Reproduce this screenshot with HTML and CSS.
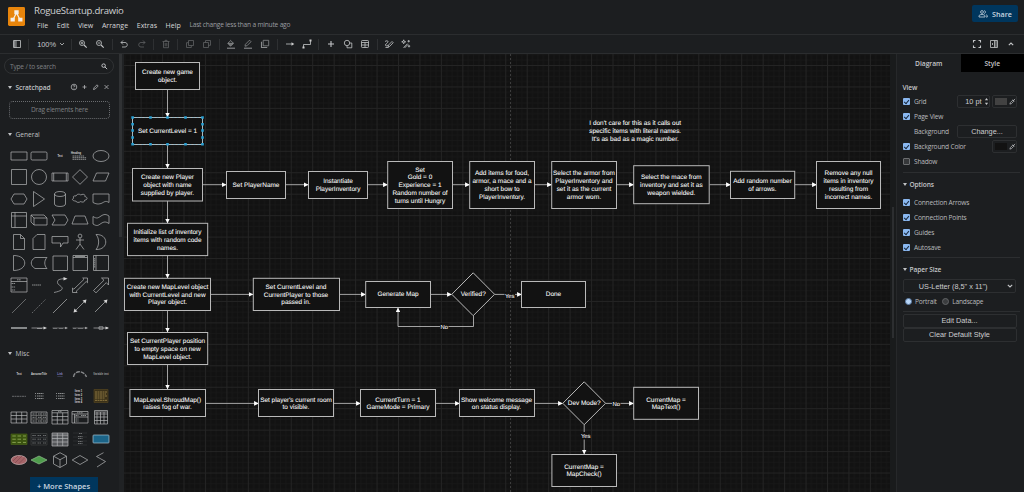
FILE: index.html
```html
<!DOCTYPE html>
<html lang="en">
<head>
  <meta charset="UTF-8">
  <meta name="viewport" content="width=device-width, initial-scale=1.0">
  <title>RogueStartup.drawio</title>
  <link rel="stylesheet" href="styles.css">
</head>
<body>

<header class="header">
  <svg class="logo" viewBox="0 0 18 20">
    <rect width="18" height="20" rx="1.5" fill="#e8850c"/>
    <path d="M9 6 5 14M9 6l4 8" stroke="#f5eee6" stroke-width="1.3"/>
    <path d="M6.7 3.5h4.6v4.2H6.7zM2.7 11.3h4.5v4H2.7zM10.8 11.3h4.5v4h-4.5z" fill="#f5eee6"/>
  </svg>
  <div class="titles">
    <div class="filename">RogueStartup.drawio</div>
    <nav class="menu">
      <span>File</span><span>Edit</span><span>View</span><span>Arrange</span><span>Extras</span><span>Help</span>
      <span class="status">Last change less than a minute ago</span>
    </nav>
  </div>
  <button class="share">
    <svg viewBox="0 0 10 8"><circle cx="4" cy="2" r="1.4"/><path d="M1 7V6c0-2 6-2 6 0v1zM6 .7c2 0 2 2.700 0 2.700M8 4.600c1 .3 1.300 1 1.300 2.400H8"/></svg>
    Share
  </button>
</header>

<div class="toolbar">
  <span class="tool"><svg viewBox="0 0 10 10"><path d="M1.500 1.500h7v7h-7zM4 1.500v7M2.700 1.500v7"/></svg></span>
  <i class="sep"></i>
  <span class="zoom">100% <svg viewBox="0 0 6 4"><path d="M1 1l2 2 2-2"/></svg></span>
  <i class="sep"></i>
  <span class="tool"><svg viewBox="0 0 10 10"><circle cx="4" cy="4" r="2.500"/><path class="thick" d="M6 6l2.700 2.700"/><path d="M2.700 4h2.600M4 2.700v2.600"/></svg></span>
  <span class="tool"><svg viewBox="0 0 10 10"><circle cx="4" cy="4" r="2.500"/><path class="thick" d="M6 6l2.700 2.700"/><path d="M2.700 4h2.600"/></svg></span>
  <i class="sep"></i>
  <span class="tool"><svg viewBox="0 0 10 10"><path d="M4 1.500 2 3.500l2 2M2 3.500h4c3 0 3 4.500 0 4.500H3"/></svg></span>
  <span class="tool off"><svg viewBox="0 0 10 10"><path d="M6 1.500l2 2-2 2M8 3.500H4c-3 0-3 4.500 0 4.500h3"/></svg></span>
  <i class="sep"></i>
  <span class="tool off"><svg viewBox="0 0 10 10"><path d="M1.500 2.500h7M4 2.300V1.300h2v1M2.500 2.500v6.200h5V2.500M4.200 4v3.300M5.800 4v3.300"/></svg></span>
  <i class="sep"></i>
  <span class="tool off"><svg viewBox="0 0 10 10"><path d="M3.500 1.500h5v5h-5zM3.500 3.700H1.500v4.800h4.800v-2"/></svg></span>
  <span class="tool off"><svg viewBox="0 0 10 10"><path d="M1.500 8.500h5v-5h-5zM3.500 3.500v-2h5v4.800h-2"/></svg></span>
  <i class="sep"></i>
  <span class="tool dim"><svg viewBox="0 0 10 10"><path d="M4.300 1.200 7.500 4.300 4.500 7 1.800 4.200 4.700 1.700"/><path d="M2 4.300h5.300L4.500 7z" fill="#999"/><path class="thick" d="M1 9.200h8"/></svg></span>
  <span class="tool dim"><svg viewBox="0 0 10 10"><path d="M2 7.200l.4-1.900L6.500 1.200 8 2.700 3.900 6.800z"/><path class="thick" d="M1 9.200h8"/></svg></span>
  <span class="tool dim"><svg viewBox="0 0 10 10"><path d="M3.200 1.300h5.500v5.500H3.200z"/><path class="thick" d="M1.500 2.800v5.700h5.700"/></svg></span>
  <i class="sep"></i>
  <span class="tool"><svg viewBox="0 0 10 10"><path d="M1 5h7"/><path d="M6.500 3.300 9.300 5 6.500 6.700z" fill="#ccc" stroke="none"/></svg></span>
  <span class="tool"><svg viewBox="0 0 10 10"><path d="M1.500 8.500V5.500h7V1.500"/><path d="M.5 7.500h2v2h-2zM7.500.5h2v2h-2z" fill="#ccc" stroke="none"/></svg></span>
  <i class="sep"></i>
  <span class="tool"><svg viewBox="0 0 10 10"><path class="thick" d="M5 2v6M2 5h6"/></svg></span>
  <span class="tool"><svg viewBox="0 0 10 10"><circle cx="4" cy="4" r="2.700"/><path d="M6.500 4h2.300v4.800H4V6.700"/></svg></span>
  <span class="tool"><svg viewBox="0 0 10 10"><rect x="1.500" y="1.500" width="7" height="7" rx=".8"/><path d="M1.500 3.500h7M1.500 6h7M5 3.500v5"/></svg></span>
  <i class="sep"></i>
  <span class="tool"><svg viewBox="0 0 10 10"><path d="M1 2.500c1.500-1 3-1 3 .2S1.500 4.500 1.500 6s1.500 1 2.500 0M4 8l.5-2L8 2.500l1.200 1.200L5.700 7.400zM1.500 8.500h3"/></svg></span>
  <span class="tool"><svg viewBox="0 0 10 10"><path d="M2.500 8.700l4-4M3.500 9l3.700-3.700M2.700.800l.5 1.500 1.500.5-1.500.5-.5 1.500-.5-1.500L.700 2.800l1.500-.5zM7.700 1v2.400M6.500 2.200h2.400M8 6v2.400M6.800 7.200h2.400"/></svg></span>
  <div class="right-tools">
    <span class="tool"><svg viewBox="0 0 10 10"><path class="thick" d="M1.500 3.500v-2h2M6.500 1.500h2v2M8.500 6.500v2h-2M3.500 8.500h-2v-2"/></svg></span>
    <span class="tool"><svg viewBox="0 0 10 10"><path d="M1.500 1.500h7v7h-7zM5.500 1.500v7M7 1.500v7M3 4l1 1-1 1"/></svg></span>
    <span class="tool"><svg viewBox="0 0 10 10"><path class="thick" d="M2.800 6.200 5 4l2.200 2.200"/></svg></span>
  </div>
</div>

<div class="workspace">
  <aside class="sidebar">
    <div class="search">Type / to search
      <svg viewBox="0 0 8 8"><circle cx="3" cy="3" r="2"/><path d="M4.500 4.500 7 7"/></svg>
    </div>
    <div class="section-head bold scratch">
      <i class="tri"></i>Scratchpad
      <svg class="scratch-tools" viewBox="0 0 42 8">
        <circle cx="5" cy="4" r="2.800"/><path d="M4.200 3.300c0-1.200 1.800-1 1.600 0L5 4.300M5 5.200v.6M15.500 2v4M13.500 4h4M24.500 6.500l.5-1.700 3-3 1.200 1.200-3 3zM35.500 2l4 4M39.500 2l-4 4"/>
      </svg>
    </div>
    <div class="dropzone">Drag elements here</div>

    <div class="section-head general"><i class="tri"></i>General</div>
    <div class="shapes">
      <svg viewBox="0 0 20 20"><path d="M2 6h16v8H2z"/></svg>
      <svg viewBox="0 0 20 20"><rect x="2" y="6" width="16" height="8" rx="1.200"/></svg>
      <svg viewBox="0 0 20 20"><text x="10" y="11">Text</text></svg>
      <svg viewBox="0 0 20 20"><text class="b" x="6" y="8">Heading</text><path class="fuzz" d="M2.500 10h12M2.500 11.700h14M2.500 13.300h14"/></svg>
      <svg viewBox="0 0 20 20"><ellipse cx="10" cy="10" rx="8" ry="5.500"/></svg>

      <svg viewBox="0 0 20 20"><path d="M2.500 2.500h15v15h-15z"/></svg>
      <svg viewBox="0 0 20 20"><circle cx="10" cy="10" r="7.500"/></svg>
      <svg viewBox="0 0 20 20"><path d="M2 6h16v8H2zM3.700 6v8M16.300 6v8"/></svg>
      <svg viewBox="0 0 20 20"><path d="M10 2.700 17.500 10 10 17.300 2.500 10z"/></svg>
      <svg viewBox="0 0 20 20"><path d="M5.500 6H18l-3.500 8H2z"/></svg>

      <svg viewBox="0 0 20 20"><path d="M5 5h10l3 5-3 5H5l-3-5z"/></svg>
      <svg viewBox="0 0 20 20"><path d="M4.500 2.500 15.500 10l-11 7.500z"/></svg>
      <svg viewBox="0 0 20 20"><path d="M4.500 5v10c0 3.300 11 3.300 11 0V5c0-3.300-11-3.300-11 0 0 3.300 11 3.300 11 0"/></svg>
      <svg viewBox="0 0 20 20"><path d="M6 7c1-2.500 4-2 4.800-1 2-1.500 5-.5 4 1.500 3 .5 3 3.500 0 3.500 0 2.500-3 2.500-4 1.500-2 1.500-4.500 1-5-.5-3.500 0-4.500-2-1.800-3C2.500 8 3.500 6.500 6 7z"/></svg>
      <svg viewBox="0 0 20 20"><path d="M2 5h16v8.500c-4-2.500-5 0-8 1s-5 .5-8-1z"/></svg>

      <svg viewBox="0 0 20 20"><path d="M2.500 2.500h15v15h-15zM2.500 6h15M6 2.500v15"/></svg>
      <svg viewBox="0 0 20 20"><path d="M2 5h13l3 3v7H5l-3-3zM2 5l3 3h13M5 8v7"/></svg>
      <svg viewBox="0 0 20 20"><path d="M2 5h13l3 5-3 5H2l3-5z"/></svg>
      <svg viewBox="0 0 20 20"><path d="M5 6h10l3 8H2z"/></svg>
      <svg viewBox="0 0 20 20"><path d="M2 6.500c4 2.500 5 1.500 8-.5s5-2 8 0v7.500c-3-2-5-2-8 0s-4 3-8 .5z"/></svg>

      <svg viewBox="0 0 20 20"><path d="M4.500 2.500h7l4 4v11h-11zM11.500 2.500v4h4"/></svg>
      <svg viewBox="0 0 20 20"><path d="M8 2.500h8v15H4V6.500z"/></svg>
      <svg viewBox="0 0 20 20"><path d="M2 4.500h16V11h-5l-2.500 4v-4H2z"/></svg>
      <svg viewBox="0 0 20 20"><circle cx="10" cy="4" r="1.900"/><path d="M10 6v6M6 8h8M10 12l-4 5.500M10 12l4 5.500"/></svg>
      <svg viewBox="0 0 20 20"><path d="M5 2.500c13-.5 13 15.500 0 15 3.500-4 3.500-11 0-15z"/></svg>

      <svg viewBox="0 0 20 20"><path d="M4.500 2.500c15 0 15 15 0 15z"/></svg>
      <svg viewBox="0 0 20 20"><path d="M6 4.500h12c-3 3-3 8 0 11H6c-5-3-5-8 0-11z"/></svg>
      <svg viewBox="0 0 20 20"><path d="M3 3h14.500v14.500H3z"/></svg>
      <svg viewBox="0 0 20 20"><path d="M3 2.500h14.500v15H3zM3 4.500h14.500M5 3.500h10"/></svg>
      <svg viewBox="0 0 20 20"><path d="M2.500 2.500h15v15h-15zM5 2.500v15"/><path class="fuzz" d="M3.700 5v10"/></svg>

      <svg viewBox="0 0 20 20"><path d="M2 3h16v14H2zM2 6.500h16"/><path class="fuzz" d="M8 4.800h4M2.500 8.500h4M2.500 12h4M2.500 15h4"/></svg>
      <svg viewBox="0 0 20 20"><path class="fuzz" d="M3 10h9"/></svg>
      <svg viewBox="0 0 20 20"><path d="M4 17.500c15-3 5-7 4-8.500C6 4.500 10 3.800 15 3.700"/><path class="solid" d="M13.500 2 17.500 3.700l-4 1.700z"/></svg>
      <svg viewBox="0 0 20 20"><path d="M2.500 17.500V13l1.300 1.200L14 4.300 12.700 3h4.800v4.800l-1.300-1.300L6 16.500l1.200 1z"/></svg>
      <svg viewBox="0 0 20 20"><path d="M2.500 15.500 13 5.200 10.500 3h7v7l-2.200-2.400L5 17.800z"/></svg>

      <svg class="grey" viewBox="0 0 20 20"><path d="M3 17 17 3"/></svg>
      <svg class="grey" viewBox="0 0 20 20"><path stroke-dasharray="1.500 1" d="M3 17 17 3"/></svg>
      <svg viewBox="0 0 20 20"><path d="M3 17 17 3"/></svg>
      <svg viewBox="0 0 20 20"><path d="M4.500 15.500l11-11"/><path class="solid" d="M3.500 16.500l1-4 3 3zM16.500 3.500l-4 1 3 3z"/></svg>
      <svg viewBox="0 0 20 20"><path d="M4 16 15.500 4.500"/><path class="solid" d="M16.500 3.500l-4 1 3 3z"/></svg>

      <svg viewBox="0 0 20 20"><path class="fat" d="M2 10h16"/></svg>
      <svg viewBox="0 0 20 20"><path d="M2.500 10H16M8 10.500h5"/><path class="solid" d="M14.500 8.500l3.500 1.500-3.500 1.500z"/></svg>
      <svg class="grey" viewBox="0 0 20 20"><path d="M2.500 10H17M3 10.500h4M9 10.500h4"/><path class="solid" d="M15 8.700l3 1.300-3 1.300z"/></svg>
      <svg class="grey" viewBox="0 0 20 20"><path d="M2.500 10H17M3 10.500h3M8 10.500h5"/><path class="solid" d="M15 8.700l3 1.300-3 1.300z"/></svg>
      <svg viewBox="0 0 20 20"><path d="M2.500 10H17M8 8.800h4v2.400H8z"/><path class="solid" d="M14.500 8.500l3.500 1.500-3.500 1.500z"/></svg>
    </div>

    <div class="section-head misc"><i class="tri"></i>Misc</div>
    <div class="shapes">
      <svg viewBox="0 0 20 20"><text x="10" y="11">Text</text></svg>
      <svg viewBox="0 0 20 20"><text class="b" x="10" y="11">AwsomeTitle</text></svg>
      <svg viewBox="0 0 20 20"><text class="link" x="10" y="11">Link</text></svg>
      <svg class="grey" viewBox="0 0 20 20"><path class="fat" stroke-dasharray="4 1" d="M3.500 13c1-7 10-7 13 0"/></svg>
      <svg class="grey" viewBox="0 0 20 20"><text x="10" y="11">Variable text</text></svg>

      <svg class="grey" viewBox="0 0 20 20"><path d="M3 10.300h14" stroke-dasharray="2 .5"/></svg>
      <svg viewBox="0 0 20 20"><path class="fuzz" d="M6 7.500h1M8 7.500h6.500M6 10h1M8 10h6.500M6 12.500h1M8 12.500h6.500"/></svg>
      <svg viewBox="0 0 20 20"><path class="fuzz" d="M6 7.500h1M8 7.500h6.500M6 10h1M8 10h6.500M6 12.500h1M8 12.500h6.500"/></svg>
      <svg viewBox="0 0 20 20"><text class="b" x="8.500" y="5.500">Item 1</text><text class="b" x="8.500" y="9.500">Item 2</text><text class="b" x="8.500" y="13.500">Item 3</text><text class="b" x="8.500" y="17">Item 4</text></svg>
      <svg viewBox="0 0 20 20"><path d="M3 3.500h14v13H3z" fill="#3b3119" stroke="#55461f"/><path d="M4 6h12M4 8h11M4 10h12M4 12h10M4 14.300h12" stroke="#b39a55" stroke-dasharray="2 .5"/></svg>

      <svg viewBox="0 0 20 20"><path d="M2 5h16v11H2zM2 8.500h16M2 12h16M7.300 5v11M12.700 5v11"/></svg>
      <svg viewBox="0 0 20 20"><path d="M2 5h16v11H2z"/><path d="M2 8.500h16M2 12h16M7.300 5v11M12.700 5v11" stroke="#777"/><path class="fuzz" d="M3.500 7h3M9 7h3M14 7h3M3.500 10.300h3M9 10.300h3M14 10.300h3M3.500 14h3M9 14h3M14 14h3"/></svg>
      <svg viewBox="0 0 20 20"><path d="M2 3.500h16v13.500H2zM2 5.800h16M2 9.500h16M2 13h16M7.300 5.800V17M12.700 5.800V17"/><path class="fuzz" d="M8 4.700h4"/></svg>
      <svg viewBox="0 0 20 20"><path d="M2 4.500h16V16H2zM2 7h16M4.500 7v9M4.500 10H18"/><path class="fuzz" d="M7 5.800h6M5.500 8.500h3M5.500 12h3M5.500 14h3M11 8.500h5"/></svg>
      <svg viewBox="0 0 20 20"><path d="M3.500 3.500h13v13.500h-13zM3.500 5h13M3.500 7h13M3.500 10h13M3.500 13.500h13M6 5v12M9.500 5v12M13 5v12"/></svg>

      <svg viewBox="0 0 20 20"><path d="M2 5h16v10.500H2z" fill="#3b5410" stroke="#486318"/><path d="M3.300 7h3.500M8.500 7H12M14 7h3M3.300 10.200h3.500M8.500 10.200H12M14 10.200h3M3.300 13.400h3.500M8.500 13.400H12M14 13.400h3" stroke="#a8c36b"/></svg>
      <svg class="grey" viewBox="0 0 20 20"><path d="M2 4.500h16v11.500H2zM2 8.300h16M2 12.200h16" stroke="#4b4d4f"/><path class="fuzz" d="M3.300 6.500h3.500M8.500 6.500H12M14 6.500h3M3.300 10.200h3.500M8.500 10.200H12M14 10.200h3M3.300 14h3.500M8.500 14H12M14 14h3"/></svg>
      <svg viewBox="0 0 20 20"><path d="M2 4h16v13H2zM2 6.200h16" fill="#55575a"/><path d="M2 9.500h16M2 13h16M7.300 4v13M12.700 4v13"/></svg>
      <svg class="grey" viewBox="0 0 20 20"><path d="M3 4h14M3 8h14M3 12h14M3 16h14" stroke="#3d3f42"/><path class="fuzz" d="M9 4.500h3M8 7.500h4.500M8 9.500h4.500M8 12.500h4.500M8 14.500h4.500"/></svg>
      <svg viewBox="0 0 20 20"><rect x="2" y="6" width="16" height="8" rx=".8" fill="#1b6488" stroke="#a9c4d2"/></svg>

      <svg viewBox="0 0 20 20"><ellipse cx="10" cy="10" rx="7.800" ry="4.500" fill="#a56468" stroke="#c9b2b2"/><path d="M4 11l5-5M6 13l7-7M10 13.500l6-6" stroke="#7e4a4f"/></svg>
      <svg viewBox="0 0 20 20"><path d="M10 6l8 4-8 4-8-4z" fill="#4f9d4c" stroke="#8fbd8c"/></svg>
      <svg viewBox="0 0 20 20"><path d="M10 2.700l6.500 3.500v7.700L10 17.500l-6.500-3.600V6.200zM3.500 6.200 10 9.700l6.500-3.500M10 9.700v7.800"/></svg>
      <svg viewBox="0 0 20 20"><path d="M10 5.500l7.800 4.500L10 14.500 2.200 10z"/></svg>
      <svg viewBox="0 0 20 20"><path d="M12.500 2.700 5.500 6.500l9 5-8.500 5.500"/></svg>
    </div>
    <button class="more">+ More Shapes</button>
  </aside>
  <div class="splitter"><i></i></div>

  <main class="canvas">
    <svg class="diagram" viewBox="124 54 766 438">
      <defs>
        <pattern id="grid" x="140.600" y="65" width="21.450" height="21.450" patternUnits="userSpaceOnUse">
          <path class="minor" d="M5.860 0v21.450M11.220 0v21.450M16.580 0v21.450M0 5.860h21.450M0 11.220h21.450M0 16.580h21.450"/>
          <path class="major" d="M.5 0v21.450M0 .5h21.450"/>
        </pattern>
        <marker id="arrow" viewBox="0 0 5 5" refX="4.600" refY="2.500" markerWidth="4.800" markerHeight="4.800" markerUnits="userSpaceOnUse" orient="auto">
          <path d="M0 0l5 2.500L0 5z" fill="#fff"/>
        </marker>
      </defs>
      <rect class="paper-grid" x="124" y="54" width="766" height="438" fill="url(#grid)"/>
      <path class="pagebreak" d="M510.500 54v438"/>

      <g class="edges">
        <path d="M167.500 89.700V117"/>
        <path d="M167.500 144.500V168"/>
        <path d="M167.500 201v22"/>
        <path d="M167.500 255.500V278"/>
        <path d="M167.500 310.500V332"/>
        <path d="M167.500 364.500V389"/>
        <path d="M202.500 184.700H226"/>
        <path d="M285.500 184.700H308"/>
        <path d="M367.500 184.700H387.500"/>
        <path d="M452.500 184.700H469.500"/>
        <path d="M534.500 184.700H551.500"/>
        <path d="M616.500 184.700H633.500"/>
        <path d="M709.500 184.700H730.500"/>
        <path d="M794.500 184.700H816.500"/>
        <path d="M210.500 294.400H253"/>
        <path d="M339.500 294.400H365.500"/>
        <path d="M430.500 294.400H451.500"/>
        <path d="M494.500 294.400H521.500"/>
        <path d="M473.500 315.500V326.500H398V308"/>
        <path d="M205.500 403.400H258.500"/>
        <path d="M333.500 403.400H360.500"/>
        <path d="M435.500 403.400H459.500"/>
        <path d="M534.500 403.400H562.500"/>
        <path d="M605.500 403.400H633.500"/>
        <path d="M584.200 424.500V454"/>
      </g>

      <g class="nodes">
        <rect x="135.500" y="62.500" width="64" height="27"/>
        <rect x="132.500" y="117.500" width="70" height="27"/>
        <rect x="132.500" y="168.500" width="70" height="32.500"/>
        <rect x="127.500" y="223.300" width="80.200" height="32.300"/>
        <rect x="226.500" y="171.500" width="59" height="27"/>
        <rect x="308.500" y="171.500" width="59" height="27"/>
        <rect x="387.700" y="161.500" width="64.800" height="47"/>
        <rect x="469.700" y="161.500" width="64.800" height="47"/>
        <rect x="551.700" y="161.500" width="64.800" height="47"/>
        <rect x="633.700" y="165.700" width="75.500" height="38"/>
        <rect x="730.500" y="171.300" width="64.200" height="27.200"/>
        <rect x="816.500" y="161.500" width="64" height="47"/>
        <rect x="124.500" y="278.300" width="86" height="32.200"/>
        <rect x="253.300" y="278.300" width="86.200" height="32.200"/>
        <rect x="127.500" y="332.500" width="80.200" height="32"/>
        <rect x="129.900" y="389.500" width="75.600" height="27"/>
        <rect x="258.500" y="389.500" width="75" height="27"/>
        <rect x="360.500" y="389.500" width="75" height="27"/>
        <rect x="459.500" y="389.500" width="75" height="27"/>
        <rect x="365.700" y="281.500" width="64.800" height="26"/>
        <path d="M473.200 272.800l21.400 21.500-21.400 21.400-21.400-21.400z"/>
        <rect x="521.500" y="281.500" width="64" height="26"/>
        <path d="M584.200 381.800l21.400 21.500-21.400 21.400-21.400-21.400z"/>
        <rect x="633.700" y="387.300" width="64.800" height="32"/>
        <rect x="551.900" y="454.500" width="64.600" height="32"/>
      </g>

      <g class="selection">
        <rect class="halo" x="132.500" y="117.500" width="70" height="27"/>
        <path d="M131.300 116.200h2.600v2.600h-2.600zM149.200 116.200h2.600v2.600h-2.600zM166.200 116.200h2.600v2.600h-2.600zM184.200 116.200h2.600v2.600h-2.600zM201.200 116.200h2.600v2.600h-2.600zM131.300 143h2.600v2.600h-2.600zM149.200 143h2.600v2.600h-2.600zM166.200 143h2.600v2.600h-2.600zM184.200 143h2.600v2.600h-2.600zM201.200 143h2.600v2.600h-2.600zM131.300 123h2.600v2.600h-2.600zM131.300 129.200h2.600v2.600h-2.600zM131.300 136.200h2.600v2.600h-2.600zM201.200 123h2.600v2.600h-2.600zM201.200 129.200h2.600v2.600h-2.600zM201.200 136.200h2.600v2.600h-2.600z"/>
      </g>

      <g class="label-bg">
        <rect x="504.500" y="292" width="10.500" height="7"/>
        <rect x="440" y="323" width="8.500" height="7"/>
        <rect x="612" y="400" width="8.500" height="7"/>
        <rect x="580" y="432" width="10.500" height="7.500"/>
      </g>

      <g class="labels">
        <text y="73.700"><tspan x="167.500">Create new game</tspan><tspan x="167.500" dy="7.800">object.</tspan></text>
        <text x="167.500" y="132.500">Set CurrentLevel = 1</text>
        <text y="179.200"><tspan x="167.500">Create new Player</tspan><tspan x="167.500" dy="7.800">object with name</tspan><tspan x="167.500" dy="7.800">supplied by player.</tspan></text>
        <text y="234"><tspan x="167.500">Initialize list of inventory</tspan><tspan x="167.500" dy="7.800">items with random code</tspan><tspan x="167.500" dy="7.800">names.</tspan></text>
        <text x="256" y="186.800">Set PlayerName</text>
        <text y="183"><tspan x="338">Instantiate</tspan><tspan x="338" dy="7.800">PlayerInventory</tspan></text>
        <text y="171.500"><tspan x="420">Set</tspan><tspan x="420" dy="7.800">Gold = 0</tspan><tspan x="420" dy="7.800">Experience = 1</tspan><tspan x="420" dy="7.800">Random number of</tspan><tspan x="420" dy="7.800">turns until Hungry</tspan></text>
        <text y="175.300"><tspan x="502">Add items for food,</tspan><tspan x="502" dy="7.800">armor, a mace and a</tspan><tspan x="502" dy="7.800">short bow to</tspan><tspan x="502" dy="7.800">PlayerInventory.</tspan></text>
        <text y="175.300"><tspan x="584">Select the armor from</tspan><tspan x="584" dy="7.800">PlayerInventory and</tspan><tspan x="584" dy="7.800">set it as the current</tspan><tspan x="584" dy="7.800">armor worn.</tspan></text>
        <text y="179.200"><tspan x="671.300">Select the mace from</tspan><tspan x="671.300" dy="7.800">inventory and set it as</tspan><tspan x="671.300" dy="7.800">weapon wielded.</tspan></text>
        <text y="183"><tspan x="762.500">Add random number</tspan><tspan x="762.500" dy="7.800">of arrows.</tspan></text>
        <text y="175.300"><tspan x="848.500">Remove any null</tspan><tspan x="848.500" dy="7.800">items in inventory</tspan><tspan x="848.500" dy="7.800">resulting from</tspan><tspan x="848.500" dy="7.800">incorrect names.</tspan></text>
        <text y="124.900"><tspan x="635.200">I don't care for this as it calls out</tspan><tspan x="635.200" dy="7.800">specific items with literal names.</tspan><tspan x="635.200" dy="7.800">It's as bad as a magic number.</tspan></text>
        <text y="288.700"><tspan x="167.500">Create new MapLevel object</tspan><tspan x="167.500" dy="7.800">with CurrentLevel and new</tspan><tspan x="167.500" dy="7.800">Player object.</tspan></text>
        <text y="288.700"><tspan x="296">Set CurrentLevel and</tspan><tspan x="296" dy="7.800">CurrentPlayer to those</tspan><tspan x="296" dy="7.800">passed in.</tspan></text>
        <text y="342.900"><tspan x="167.500">Set CurrentPlayer position</tspan><tspan x="167.500" dy="7.800">to empty space on new</tspan><tspan x="167.500" dy="7.800">MapLevel object.</tspan></text>
        <text y="401.500"><tspan x="167.500">MapLevel.ShroudMap()</tspan><tspan x="167.500" dy="7.800">raises fog of war.</tspan></text>
        <text y="401.500"><tspan x="296">Set player's current room</tspan><tspan x="296" dy="7.800">to visible.</tspan></text>
        <text y="401.500"><tspan x="398">CurrentTurn = 1</tspan><tspan x="398" dy="7.800">GameMode = Primary</tspan></text>
        <text y="401.500"><tspan x="496.500">Show welcome message</tspan><tspan x="496.500" dy="7.800">on status display.</tspan></text>
        <text x="398" y="296.200">Generate Map</text>
        <text x="473.200" y="296.200">Verified?</text>
        <text x="553.500" y="296.200">Done</text>
        <text x="584.200" y="405.200">Dev Mode?</text>
        <text y="401.500"><tspan x="666">CurrentMap =</tspan><tspan x="666" dy="7.800">MapText()</tspan></text>
        <text y="468.600"><tspan x="584">CurrentMap =</tspan><tspan x="584" dy="7.800">MapCheck()</tspan></text>
        <g class="small">
          <text x="509.700" y="298">Yes</text>
          <text x="444.300" y="329">No</text>
          <text x="616.300" y="405.800">No</text>
          <text x="585.700" y="438">Yes</text>
        </g>
      </g>
    </svg>
  </main>
  <div class="scrollbar"><i></i></div>

  <aside class="format">
    <div class="tabs"><span>Diagram</span><span class="other">Style</span></div>

    <section class="group view">
      <h4>View</h4>
      <div class="row"><i class="check on"></i>Grid
        <span class="number">10 pt <svg viewBox="0 0 5 10"><path d="M.7 3.500 2.500 1l1.800 2.500zM.7 6.500 2.500 9l1.800-2.500z"/></svg></span>
        <span class="color"><i class="grey-swatch"></i><svg viewBox="0 0 8 8"><path d="M1 7l.5-1.700 3-3L5.700 3.500l-3 3zM4.300 1.800l2 2M5.500 2.500 7 1"/></svg></span>
      </div>
      <div class="row"><i class="check on"></i>Page View</div>
      <div class="row indent">Background <span class="change">Change...</span></div>
      <div class="row"><i class="check on"></i>Background Color
        <span class="color end"><i class="dark-swatch"></i><svg viewBox="0 0 8 8"><path d="M1 7l.5-1.700 3-3L5.700 3.500l-3 3zM4.300 1.800l2 2M5.500 2.500 7 1"/></svg></span>
      </div>
      <div class="row"><i class="check"></i>Shadow</div>
    </section>

    <section class="group options">
      <h4><i class="tri"></i>Options</h4>
      <div class="row"><i class="check on"></i>Connection Arrows</div>
      <div class="row"><i class="check on"></i>Connection Points</div>
      <div class="row"><i class="check on"></i>Guides</div>
      <div class="row"><i class="check on"></i>Autosave</div>
    </section>

    <section class="group paper">
      <h4><i class="tri"></i>Paper Size</h4>
      <div class="select">US-Letter (8,5" x 11") <svg viewBox="0 0 6 4"><path d="M.8.800 3 3 5.200.800"/></svg></div>
      <div class="row radios"><i class="radio on"></i>Portrait <i class="radio"></i>Landscape</div>
    </section>

    <section class="actions">
      <div class="wide">Edit Data...</div>
      <div class="wide">Clear Default Style</div>
    </section>
  </aside>
</div>

</body>
</html>
```

FILE: styles.css
```css
* { box-sizing: border-box; }
body {
  margin: 0;
  width: 1024px;
  height: 492px;
  overflow: hidden;
  display: flex;
  flex-direction: column;
  background: #1c1e20;
  color: #c4c6c8;
  font: 6.6px "Open Sans", sans-serif;
}
svg { display: block; fill: none; stroke: #c4c6c8; stroke-width: 0.8; }
button { border: 0; font-family: inherit; }

/* header */
.header { display: flex; height: 34px; padding: 7px 6px 0 8px; flex: none; }
.logo { width: 17px; height: 19px; stroke: none; }
.titles { margin-left: 9px; flex: 1; }
.filename { margin-top: -3px; font-size: 9.6px; letter-spacing: -0.26px; line-height: 13px; color: #cfd1d3; }
.menu { display: flex; gap: 8.6px; margin: 2px 0 0 3px; font-size: 7.05px; line-height: 12px; color: #d6d7d9; }
.status { font-size: 6.6px; letter-spacing: -0.2px; color: #9b9da0; }
.share {
  display: flex;
  align-items: center;
  justify-content: center;
  gap: 4px;
  width: 46px;
  height: 17px;
  margin-top: -2px;
  border-radius: 2px;
  background: #00365d;
  color: #c9d6e0;
  font-size: 7.2px;
  font-weight: 600;
}
.share svg { width: 10px; height: 8px; stroke: #c9d6e0; }

/* toolbar */
.toolbar {
  display: flex;
  align-items: center;
  flex: none;
  height: 20px;
  padding: 0 4px 0 8px;
  border-top: 1px solid #2b2d2f;
  border-bottom: 1px solid #2b2d2f;
}
.tool { display: flex; justify-content: center; width: 17.15px; }
.tool svg { width: 10px; height: 10px; }
.thick { stroke-width: 1.1; }
.off svg { opacity: 0.4; }
.dim svg { opacity: 0.65; }
.sep { width: 1px; height: 11px; margin: 0 3px; background: #2e3032; }
.zoom {
  display: flex;
  align-items: center;
  justify-content: space-between;
  width: 35.5px;
  padding: 0 3px 0 5px;
  font: 7.4px "Liberation Sans", sans-serif;
}
.zoom svg { width: 6px; height: 4px; }
.right-tools { display: flex; margin-left: auto; }

/* shape library */
.workspace { display: flex; flex: 1; min-height: 0; }
.sidebar { width: 119.5px; padding: 4px 0 0 4px; overflow: hidden; }
.search {
  display: flex;
  align-items: center;
  justify-content: space-between;
  width: 110px;
  height: 16px;
  padding: 0 5px;
  border: 1px solid #303234;
  border-radius: 8px;
  color: #7e8083;
  font-size: 6.6px;
  letter-spacing: -0.2px;
}
.search svg { width: 7px; height: 7px; stroke-width: 1.1; }
.section-head { display: flex; align-items: center; height: 16px; padding-left: 4px; font-size: 6.6px; color: #c0c2c4; }
.tri {
  width: 0;
  height: 0;
  margin-right: 3.5px;
  border: 2.3px solid transparent;
  border-top: 3px solid #c0c2c4;
  border-bottom: 0;
}
.bold { font-weight: 600; }
.scratch { margin-top: 5px; font-size: 6.6px; letter-spacing: -0.05px; }
.scratch-tools { width: 42px; height: 8px; margin: 0 8px 0 auto; stroke-width: 0.7; }
.dropzone {
  width: 101px;
  height: 18px;
  margin: 6px 0 0 5px;
  border: 1px dotted #6a6c6f;
  border-radius: 4px;
  color: #7e8083;
  font-size: 6.6px;
  letter-spacing: -0.2px;
  line-height: 16px;
  text-align: center;
}
.general { margin-top: 7.5px; }
.misc { margin-top: 6.5px; }
.shapes {
  display: grid;
  grid-template-columns: repeat(5, 20.4px);
  grid-auto-rows: 21.5px;
  place-items: center;
  margin: 2.5px 0 0 4.8px;
}
.shapes svg { width: 20px; height: 20px; stroke: #b4b6b8; stroke-width: 0.7; }
.shapes text { fill: #d5d5d5; stroke: none; font: bold 2.6px "Liberation Sans", sans-serif; text-anchor: middle; }
.shapes .b { font-weight: bold; }
.shapes .link { fill: #8d8fd0; text-decoration: underline; }
.shapes .fuzz { stroke: #96989a; stroke-width: 0.9; stroke-dasharray: 1.6 0.4; }
.shapes .solid { fill: #d5d5d5; stroke: none; }
.shapes .fat { stroke-width: 1.4; }
.shapes .grey { opacity: 0.7; }
.more {
  display: block;
  width: 68px;
  height: 18px;
  margin: 5.5px 0 0 25.5px;
  padding: 0;
  background: #00365d;
  color: #cbd7e0;
  font-size: 7.5px;
  font-weight: 600;
}
.splitter { width: 4.5px; background: #202224; }
.splitter i { display: block; width: 2.5px; height: 183px; background: #303234; }

/* diagram */
.canvas { width: 766px; background: #121212; }
.diagram { width: 766px; height: 438px; }
.paper-grid { stroke: none; }
.minor { stroke: #181818; stroke-width: 0.8; }
.major { stroke: #242424; stroke-width: 1; }
.pagebreak { stroke: #3c3c3c; stroke-width: 1; stroke-dasharray: 2 2; }
.edges { stroke: #c8c8c8; stroke-width: 0.8; }
.edges path { marker-end: url(#arrow); }
defs marker path { stroke: none; }
.nodes { fill: #121212; stroke: #b9b9b9; stroke-width: 1; }
.selection { fill: #29a0d4; stroke: none; }
.halo { fill: none; stroke: #29b6f2; stroke-width: 0.3; stroke-dasharray: 2 2; }
.label-bg { fill: #121212; stroke: none; }
.labels {
  fill: #fff;
  stroke: #fff;
  stroke-width: 0.05;
  font: 6.45px "Liberation Sans", sans-serif;
  text-anchor: middle;
  text-rendering: geometricPrecision;
}
.small { font-size: 5.9px; }

.scrollbar { width: 6.5px; padding: 153px 0 0 2px; background: #191b1c; }
.scrollbar i { display: block; width: 2.5px; height: 131px; background: #2c2e30; }

/* format panel */
.format { flex: 1; border-left: 1px solid #26282a; }
.tabs { display: flex; height: 18px; font-size: 6.7px; font-weight: 600; line-height: 19px; text-align: center; }
.tabs span { width: 63.5px; }
.tabs .other { flex: 1; background: #000; }
.group { margin: 0 4px 0 5.5px; border-bottom: 1px solid #2c2e30; }
.group h4 { display: flex; align-items: center; height: 14px; margin: 0; font-size: 6.6px; letter-spacing: -0.1px; font-weight: 600; }
.view { height: 101px; padding-top: 8px; }
.options { height: 85px; padding-top: 4px; }
.options h4 { margin-bottom: 4px; }
.paper { height: 53.5px; padding-top: 4px; }
.row { display: flex; align-items: center; height: 15px; color: #b9bbbd; font-size: 6.6px; letter-spacing: -0.2px; }
.indent { padding-left: 11.5px; }
.group h4 .tri { margin-right: 3px; border-width: 3px 2.3px 0; }
.check { width: 7px; height: 7px; margin-right: 4.5px; border: 1px solid #6c6e70; border-radius: 1px; background: #36383a; }
.check.on { border: 0; background: #8ab8f0; }
.check.on::after {
  content: "";
  display: block;
  width: 2.3px;
  height: 4px;
  margin: 0.8px 0 0 2.4px;
  border: solid #16263a;
  border-width: 0 1px 1px 0;
  transform: rotate(40deg);
}
.number, .color, .change, .select, .wide {
  border: 1px solid #2d2f31;
  border-radius: 2px;
  color: #cccdcf;
  font: 7.3px "Liberation Sans", sans-serif;
  letter-spacing: 0;
}
.number { display: flex; align-items: center; justify-content: flex-end; gap: 2px; width: 33px; height: 13px; margin-left: auto; }
.number svg { width: 5px; height: 9px; fill: #c4c6c8; stroke: none; }
.color { display: flex; align-items: center; gap: 2px; width: 25px; height: 13px; margin: 0 3px 0 2.5px; padding-left: 1.5px; }
.color.end { margin-left: auto; }
.color i { width: 12px; height: 7px; }
.color svg { width: 7px; height: 7px; }
.grey-swatch { background: #424242; }
.dark-swatch { background: #121212; }
.change { width: 60px; height: 13px; margin: 0 3px 0 auto; line-height: 12px; text-align: center; }
.select { display: flex; align-items: center; justify-content: flex-end; gap: 19px; width: 113px; height: 14px; margin-top: 3px; padding-right: 2px; }
.select svg { width: 6px; height: 4px; stroke-width: 1.1; }
.radios { height: 16.5px; }
.radio { width: 7px; height: 7px; margin: 0 3.5px 0 2px; border: 1px solid #626466; border-radius: 50%; background: #3b3d3f; }
.radio:not(.on) { margin-left: 5px; }
.radio.on { border: 1.5px solid #5b7ca5; background: #b7d5f7; }
.actions { padding: 2.5px 0 0 5.5px; }
.wide { width: 114px; height: 14px; line-height: 12px; text-align: center; }
```
